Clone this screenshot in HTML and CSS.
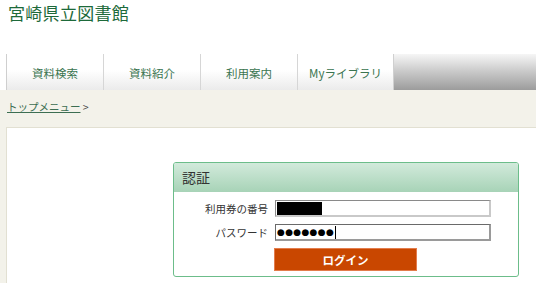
FILE: index.html
```html
<!DOCTYPE html>
<html lang="ja">
<head>
<meta charset="utf-8">
<title>宮崎県立図書館</title>
<link rel="stylesheet" href="styles.css">
</head>
<body>
<header class="site-header">
  <div class="site-title">宮崎県立図書館</div>
  <nav class="tabs">
    <a class="tab" href="#">資料検索</a>
    <a class="tab" href="#">資料紹介</a>
    <a class="tab" href="#">利用案内</a>
    <a class="tab" href="#">Myライブラリ</a>
    <div class="tab-fill"></div>
  </nav>
</header>
<main class="main">
  <div class="breadcrumb"><a href="#">トップメニュー</a> &gt;</div>
  <div class="content">
    <section class="auth">
      <h2 class="auth-head">認証</h2>
      <div class="auth-body">
        <div class="row">
          <label class="label">利用券の番号</label>
          <div class="input"><span class="redacted"></span></div>
        </div>
        <div class="row">
          <label class="label">パスワード</label>
          <div class="input input-focus"><span class="dots">●●●●●●●</span><span class="caret"></span></div>
        </div>
        <div class="row">
          <span class="label"></span>
          <button class="btn">ログイン</button>
        </div>
      </div>
    </section>
  </div>
</main>
</body>
</html>
```

FILE: styles.css
```css
* { box-sizing: border-box; }
html, body { margin: 0; padding: 0; }
body {
  width: 536px;
  height: 283px;
  overflow: hidden;
  background: #fff;
  font-family: "Noto Sans CJK JP", "Noto Sans", sans-serif;
  color: #333;
}
.site-header { background: #fff; }
.site-title {
  height: 54px;
  padding: 1px 0 0 8px;
  font-size: 17px;
  line-height: 24px;
  color: #1d6a3a;
  letter-spacing: 0.3px;
}
.tabs {
  display: flex;
  height: 36px;
  padding-left: 6px;
}
.tab {
  width: 97px;
  display: flex;
  align-items: center;
  justify-content: center;
  font-size: 11.5px;
  color: #3a7550;
  text-decoration: none;
  background: linear-gradient(#ffffff, #ffffff 45%, #ebebeb);
  border-left: 1px solid #d6d6d6;
  padding-top: 1px;
}
.tab:first-child { border-left-color: #cfcfcf; }
.tab:nth-child(4) { border-right: 1px solid #d0d0d0; }
.tab-fill {
  flex: 1;
  background: linear-gradient(#f6f6f6, #c8c8c8 50%, #9c9c9c);
}
.main {
  background: #f3f2ea;
  height: 193px;
  padding-left: 6px;
}
.breadcrumb {
  height: 37px;
  padding: 10px 0 0 1px;
  font-size: 10.5px;
  line-height: 14px;
  color: #444;
}
.breadcrumb a { color: #3c6e52; text-decoration: underline; }
.content {
  background: #fff;
  border-top: 1px solid #e2e0d2;
  border-left: 1px solid #e2e0d2;
  height: 160px;
  padding: 34px 0 0 166px;
}
.auth {
  width: 346px;
  border: 1px solid #6cbd8a;
  border-radius: 3px;
  background: #fff;
}
.auth-head {
  margin: 0;
  height: 29px;
  padding: 0 0 0 8px;
  font-size: 14px;
  font-weight: normal;
  line-height: 29px;
  color: #333;
  background: linear-gradient(#d2eadb, #a7d3b7);
  border-radius: 2px 2px 0 0;
}
.auth-body {
  padding: 8px 0 5px;
  display: flex;
  flex-direction: column;
  gap: 7px;
}
.row {
  display: flex;
  align-items: center;
  gap: 7px;
}
.label {
  width: 94px;
  text-align: right;
  font-size: 10.5px;
  color: #333;
}
.input {
  width: 216px;
  height: 17px;
  border: 1px solid #8a8a8a;
  border-right: 2px solid #c9c9c9;
  border-bottom: 2px solid #c9c9c9;
  display: flex;
  align-items: center;
  padding-left: 1px;
}
.input-focus { border-color: #6a6a6a #9a9a9a #9a9a9a #6a6a6a; }
.redacted {
  display: block;
  width: 45px;
  height: 13px;
  background: #000;
}
.dots {
  font-size: 9px;
  letter-spacing: 0.3px;
  line-height: 13px;
  color: #000;
  font-family: "DejaVu Sans", sans-serif;
}
.caret {
  display: block;
  width: 1px;
  height: 13px;
  margin-left: 1px;
  background: #000;
}
.btn {
  width: 143px;
  height: 23px;
  margin-left: -1px;
  border: 1px solid #e37c4c;
  background: #c94700;
  color: #fff;
  font-family: "Noto Sans CJK JP", sans-serif;
  font-size: 11.5px;
  font-weight: bold;
  padding: 0;
}
```
